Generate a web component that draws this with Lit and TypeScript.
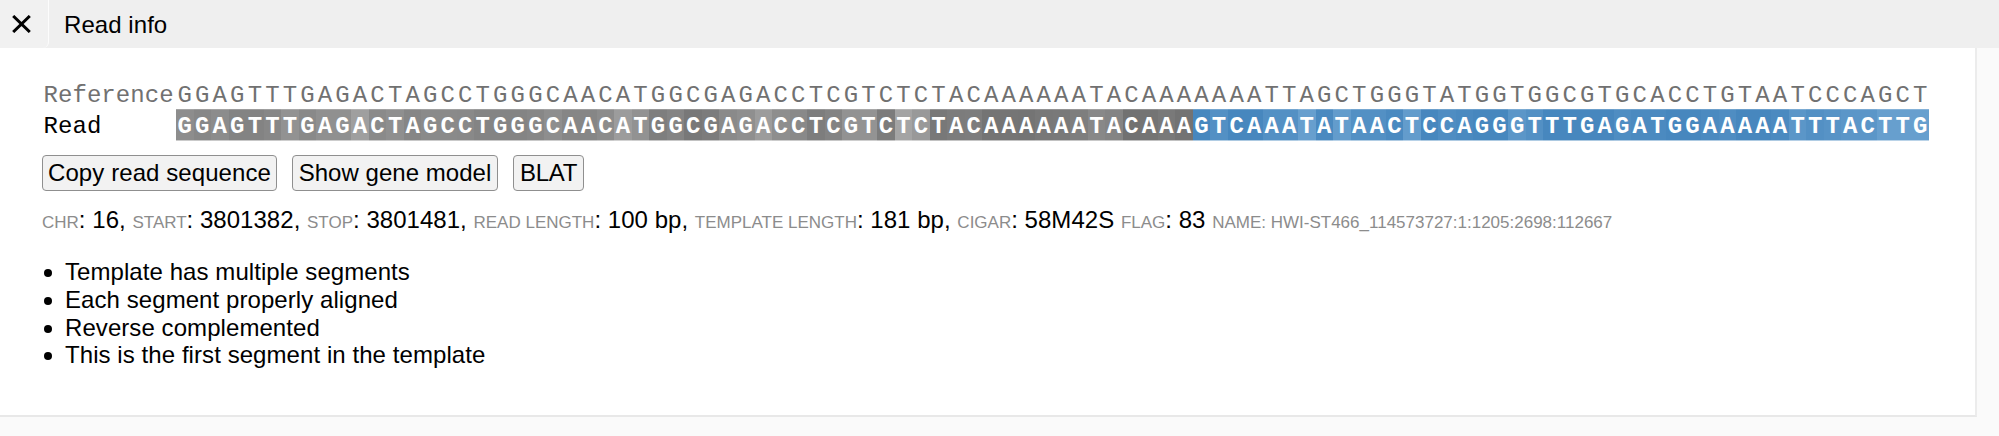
import { LitElement, html, css } from "lit";
import { customElement } from "lit/decorators.js";

const REFERENCE =
  "GGAGTTTGAGACTAGCCTGGGCAACATGGCGAGACCTCGTCTCTACAAAAAATACAAA" +
  "AAAATTAGCTGGGTATGGTGGCGTGCACCTGTAATCCCAGCT";
const READ =
  "GGAGTTTGAGACTAGCCTGGGCAACATGGCGAGACCTCGTCTCTACAAAAAATACAAA" +
  "GTCAAATATAACTCCAGGGTTTGAGATGGAAAAATTTACTTG";

// Grey level of each aligned base; a lighter shade is a lower base quality.
const MATCHED = (
  "8d 87 8c 83 83 87 92 89 90 90 9f 8a 8f 86 8a 8a 89 84 84 84 " +
  "87 8e 86 86 8c 9c 92 7e 84 78 7c 8a 8f 9c 8e 89 7d 83 92 93 " +
  "7c a4 99 78 7c 7d 74 75 74 78 79 7e 88 84 71 74 79 73"
).split(" ");

// Lightness step, 0 (high quality) to 9, of each soft-clipped base.
const CLIP_STEPS = [
  0, 3, 0, 0, 3, 3, 8, 1, 7, 3, 3, 1, 7, 0, 2, 1, 0, 0, 5, 3, 0, 0, 0, 0, 2, 1,
  1, 0, 0, 1, 2, 0, 0, 1, 5, 3, 4, 5, 5, 8, 8, 8,
];

const clippedColor = (step: number) =>
  `rgb(${71 + step * 4}, ${135 + step * 3}, ${190 + step * 2})`;

const FIELDS: [string, string][] = [
  ["CHR", "16,"],
  ["START", "3801382,"],
  ["STOP", "3801481,"],
  ["READ LENGTH", "100 bp,"],
  ["TEMPLATE LENGTH", "181 bp,"],
  ["CIGAR", "58M42S"],
  ["FLAG", "83"],
];

const FLAGS = [
  "Template has multiple segments",
  "Each segment properly aligned",
  "Reverse complemented",
  "This is the first segment in the template",
];

@customElement("app-root")
export class AppRoot extends LitElement {
  static styles = css`
    :host {
      display: block;
      box-sizing: border-box;
      height: 436px;
      overflow: hidden;
      background: #fafafa;
      color: #000;
      font: 24px/27.6px "Liberation Sans", Arial, sans-serif;
    }
    .header {
      display: flex;
      height: 48px;
      background: #efefef;
      line-height: 49px;
    }
    .close {
      display: flex;
      box-sizing: border-box;
      width: 49px;
      padding: 14.5px 0 0 12px;
      background: #f1f1f1;
      border-right: 1px solid #fcfcfc;
      border-bottom-right-radius: 6px;
    }
    .close svg {
      width: 19px;
      height: 18px;
    }
    .title {
      padding-left: 15px;
      letter-spacing: 0.06px;
    }
    .panel {
      box-sizing: border-box;
      width: 1977px;
      height: 369px;
      padding: 30px 0 0 42px;
      background: #fff;
      border-right: 2px solid #ececec;
      border-bottom: 2px solid #e8e8e8;
    }
    .row {
      display: flex;
      height: 31px;
      font: 24px/35px "Liberation Mono", "Courier New", monospace;
    }
    .label {
      box-sizing: border-box;
      width: 134px;
      padding-left: 1.5px;
      letter-spacing: 0.06px;
    }
    .base {
      box-sizing: border-box;
      width: 17.54px;
      padding-left: 1.5px;
    }
    .muted {
      color: #717171;
    }
    .read {
      height: 32px;
    }
    .read .base {
      border-top: 1px solid rgba(255, 255, 255, 0.2);
      border-bottom: 1px solid rgba(255, 255, 255, 0.55);
      color: #fff;
      font-weight: bold;
      line-height: 33px;
      height: 32px;
    }
    .buttons {
      display: flex;
      gap: 15px;
      margin-top: 14px;
    }
    .button {
      box-sizing: border-box;
      height: 36px;
      padding: 0;
      border: 1px solid #8f8f8f;
      border-radius: 4px;
      background: #f2f2f2;
      color: #000;
      font: inherit;
      line-height: 34px;
      letter-spacing: 0.08px;
    }
    .copy {
      width: 235px;
    }
    .gene {
      width: 206px;
      letter-spacing: 0.03px;
    }
    .blat {
      width: 71px;
      letter-spacing: -0.25px;
    }
    .fields {
      height: 28px;
      margin-top: 15px;
      line-height: 28px;
      letter-spacing: 0.03px;
      white-space: nowrap;
    }
    .small {
      color: #8c8c8c;
      font-size: 17px;
      line-height: 1;
      letter-spacing: 0;
    }
    .flags {
      margin: 24px 0 0;
      padding: 0 0 0 23px;
      list-style: none;
      letter-spacing: 0.07px;
    }
    .flag {
      display: flex;
      height: 27.75px;
    }
    .flag::before {
      content: "";
      width: 8px;
      height: 8px;
      margin: 11px 13px 0 -21px;
      border-radius: 50%;
      background: #000;
    }
  `;

  private cellColor(i: number) {
    return i < MATCHED.length
      ? `#${MATCHED[i].repeat(3)}`
      : clippedColor(CLIP_STEPS[i - MATCHED.length]);
  }

  render() {
    return html`
      <div class="header">
        <div class="close">
          <svg viewBox="0 0 19 18" fill="none" stroke="#000" stroke-width="3">
            <path d="M1.2 1 L17.8 17 M17.8 1 L1.2 17" />
          </svg>
        </div>
        <div class="title">Read info</div>
      </div>
      <div class="panel">
        <div class="row muted">
          <div class="label">Reference</div>
          ${[...REFERENCE].map((b) => html`<div class="base">${b}</div>`)}
        </div>
        <div class="row read">
          <div class="label">Read</div>
          ${[...READ].map(
            (b, i) =>
              html`<div class="base" style="background:${this.cellColor(i)}">${b}</div>`
          )}
        </div>
        <div class="buttons">
          <button class="button copy">Copy read sequence</button>
          <button class="button gene">Show gene model</button>
          <button class="button blat">BLAT</button>
        </div>
        <div class="fields">
          ${FIELDS.map(
            ([k, v]) => html`<span class="small">${k}</span>: ${v} `
          )}<span class="small">NAME: HWI-ST466_114573727:1:1205:2698:112667</span>
        </div>
        <ul class="flags">
          ${FLAGS.map((f) => html`<li class="flag">${f}</li>`)}
        </ul>
      </div>
    `;
  }
}
